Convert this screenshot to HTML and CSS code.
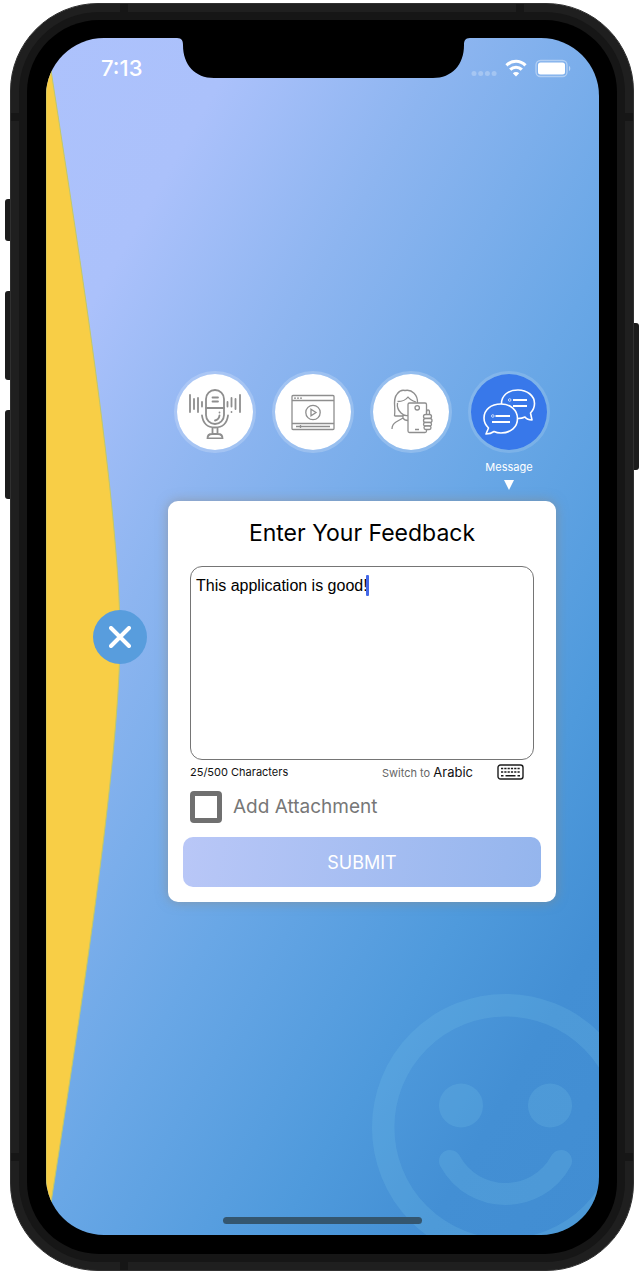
FILE: index.html
```html
<!DOCTYPE html>
<html lang="en">
<head>
<meta charset="utf-8">
<meta name="viewport" content="width=device-width, initial-scale=1">
<title>Feedback</title>
<link rel="stylesheet" href="styles.css">
</head>
<body>
<div class="phone">
  <span class="key key-mute"></span>
  <span class="key key-up"></span>
  <span class="key key-down"></span>
  <span class="key key-power"></span>
  <span class="band band-top band-start"></span>
  <span class="band band-top band-end"></span>
  <span class="band band-left band-high"></span>
  <span class="band band-right band-high"></span>
  <span class="band band-left band-low"></span>
  <span class="band band-right band-low"></span>
  <span class="band band-bottom band-start"></span>
  <div class="bezel">
    <div class="glass">
      <div class="screen">
        <svg class="curve" viewBox="0 0 74 1197" preserveAspectRatio="none" aria-hidden="true">
          <path d="M0 0C31 200 74 470 74 598C74 727 31 997 0 1197Z" fill="#f8ce46" stroke="#c0c86c" stroke-width="1"/>
        </svg>
        <svg class="smiley" viewBox="0 0 227 241" aria-hidden="true">
          <circle cx="133.500" cy="133.500" r="122.300" fill="none" stroke="currentColor" stroke-width="22.400"/>
          <circle cx="89" cy="111.500" r="22" fill="currentColor"/>
          <circle cx="178" cy="111.500" r="22" fill="currentColor"/>
          <path d="M78 167C102 211 165 211 189 167" fill="none" stroke="currentColor" stroke-width="22" stroke-linecap="round"/>
        </svg>
        <svg class="notch" viewBox="0 0 293 40" aria-hidden="true">
          <path d="M0 0C5 0 6 3 6 7C6 27 18 40 37 40H256C275 40 287 27 287 7C287 3 288 0 293 0Z"/>
        </svg>

        <header class="status">
          <time class="clock">7:13</time>
          <div class="signals">
            <svg class="dots" width="26" height="20" viewBox="0 0 26 20" fill="#fff" fill-opacity=".25"><circle cx="3" cy="15.500" r="2.500"/><circle cx="9.700" cy="15.500" r="2.500"/><circle cx="16.400" cy="15.500" r="2.500"/><circle cx="23.100" cy="15.500" r="2.500"/></svg>
            <svg width="22" height="20" viewBox="0 0 22 20" fill="none" stroke="#fff" stroke-width="3.200"><path d="M1.500 7.300C7 1.900 15 1.900 20.500 7.300"/><path d="M5.200 11.700C8.500 8.400 13.500 8.400 16.800 11.700"/><path d="M11 18.500L7.800 15.200C9.500 13.600 12.500 13.600 14.200 15.200Z" fill="#fff" stroke="none"/></svg>
            <svg width="36" height="20" viewBox="0 0 36 20"><rect x="1" y="2.500" width="31" height="16" rx="4.500" fill="none" stroke="#fff" stroke-opacity=".4" stroke-width="1.300"/><rect x="3" y="4.500" width="27" height="12" rx="2.500" fill="#fff"/><path d="M34 8C35.700 8.500 35.700 12.500 34 13Z" fill="#fff" fill-opacity=".5"/></svg>
          </div>
        </header>

        <main class="stage">
          <button class="close" type="button" aria-label="Close">
            <svg width="22" height="22" viewBox="0 0 22 22" fill="none" stroke="#fff" stroke-width="4" stroke-linecap="round"><path d="M2 2L20 20M20 2L2 20"/></svg>
          </button>
          <div class="panel">
            <nav class="modes" aria-label="Feedback type">
              <div class="mode">
                <button class="disc" type="button" aria-label="Audio">
                  <svg width="54" height="54" viewBox="0 0 54 54" fill="none" stroke="#8e8e8e" stroke-width="1.800" stroke-linecap="round"><rect x="18" y="5" width="18" height="34" rx="9"/><path d="M18 23H36M24.500 12.500H30M24.500 16.500H30M14 30.500C15 38.500 20 42.500 27 42.500S39 38.500 40 30.500M24.500 43V49M29.500 43V49M19.500 53.500C19.500 50 22 49 24 49H30C32 49 34.500 50 34.500 53.500ZM2 10V27M6 14V24M10 13V27M14 17V21.500M39.500 17V21.500M43.500 13V21.500M47.500 14V24M52 10V27M43.500 27V27.100M31.500 27.500V27.600M31.500 30.500C31 33.500 29.500 35 27 35.500"/></svg>
                </button>
              </div>
              <div class="mode">
                <button class="disc" type="button" aria-label="Video">
                  <svg width="54" height="54" viewBox="0 0 54 54" fill="none" stroke="#8e8e8e" stroke-width="1.300"><rect x="6" y="10.500" width="42" height="34" rx="1"/><path d="M6 15.500H48M6 38.500H48M10 41.500H44M14.500 40V43"/><path d="M8 13.200H16" stroke-dasharray="2 1"/><circle cx="27" cy="27.500" r="7.200"/><path d="M25 24.300L30 27.500L25 30.700Z"/></svg>
                </button>
              </div>
              <div class="mode">
                <button class="disc" type="button" aria-label="Photo">
                  <svg width="54" height="54" viewBox="0 0 54 54" fill="none" stroke="#8e8e8e" stroke-width="1.300" stroke-linejoin="round"><path d="M10.500 31C12 23 8 14 13.500 8.500C16 5 19 5 21 5.500C28 4 34 10 33.500 18M10.500 31H19.500M13.500 18C13 21 14 25 17 28C18.500 29.500 21 31 24 30.500M13.500 16.500C18 16.500 22 15 24 12C26 15 29 16 32 17M19 29V33L12 37C9 39 8 41 8 44M19 33C20 35 22 35.500 24 35.500"/><rect x="24" y="18" width="18.500" height="29.500" rx="1.500" fill="#fff"/><circle cx="33.200" cy="22.800" r="2.200"/><path d="M31 44.500H35M42.500 27.500C42.500 24 45.500 24 45.500 27.500V30.500"/><rect x="39.500" y="29.500" width="8" height="4" rx="2" fill="#fff"/><rect x="39.500" y="33.500" width="8.500" height="4" rx="2" fill="#fff"/><rect x="39.500" y="37.500" width="8" height="3.500" rx="1.700" fill="#fff"/><rect x="40" y="41" width="7" height="3.500" rx="1.700" fill="#fff"/></svg>
                </button>
              </div>
              <div class="mode">
                <button class="disc disc-active" type="button" aria-labelledby="mode-message">
                  <svg width="54" height="54" viewBox="0 0 54 54" fill="#3878ea" stroke="#fff" stroke-width="1.600" stroke-linejoin="round"><path d="M36 5C26 5 19.500 10.500 19.500 18.500C19.500 27.500 26 33.500 36 33.500C39 33.500 41 33 43 32C44.500 34 47 35 50 35L48.500 28C51 25.500 52.500 22.500 52.500 18.500C52.500 10.500 45 5 36 5Z"/><path d="M31 15H45M31 21H45" stroke-width="1.900"/><circle cx="27.700" cy="15" r="1.300" stroke-width=".7"/><path d="M19 19C9 19 2 24.500 2 33C2 37.500 4 40.500 6.500 43L4 49C7.500 49 10 48 12 46.500C14 47.500 16.500 48 19 48C29 48 35.500 42 35.500 33.500C35.500 25 28.500 19 19 19Z"/><path d="M13.500 31H28M10 37H28" stroke-width="1.900"/><circle cx="10.800" cy="31" r="1.300" stroke-width=".7"/></svg>
                </button>
                <span class="mode-name" id="mode-message">Message</span>
                <svg class="arrow" width="10" height="10" viewBox="0 0 10 10" fill="#fff"><path d="M0 0H10L5 10Z"/></svg>
              </div>
            </nav>

            <form class="card">
              <h1 class="title"><label for="feedback">Enter Your Feedback</label></h1>
              <div class="field">
                <textarea class="message" id="feedback" spellcheck="false">This application is good!</textarea>
                <span class="caret"></span>
              </div>
              <div class="meta">
                <span class="count">25/500 Characters</span>
                <span class="switch">Switch to <button class="lang" type="button">Arabic</button></span>
                <button class="keyboard" type="button" aria-label="Keyboard">
                  <svg width="27" height="16" viewBox="0 0 27 16" fill="none" stroke="#1c1c1c" stroke-width="1.400"><rect x="1" y="1" width="25" height="14" rx="2.500"/><path d="M4 4.500H23M4 8H23" stroke-dasharray="2.200 1.100"/><path d="M4 11.800H6.500M8.500 11.800H18.500M20.500 11.800H23"/></svg>
                </button>
              </div>
              <label class="attach"><input class="tick" type="checkbox">Add Attachment</label>
              <button class="submit" type="submit">SUBMIT</button>
            </form>
          </div>
        </main>

        <footer class="home"><span class="home-bar"></span></footer>
      </div>
    </div>
  </div>
</div>
</body>
</html>
```
FILE: styles.css
```css
* {
  box-sizing: border-box;
}

body {
  margin: 0;
  padding: 3px 10px;
  min-height: 100vh;
  display: flex;
  background: #fff;
  font-family: Inter, Roboto, sans-serif;
  color: #111;
}

button {
  padding: 0;
  border: 0;
  background: none;
  font: inherit;
  color: inherit;
  cursor: pointer;
}

svg {
  display: block;
}

/* Device shell */
.phone {
  position: relative;
  flex: 1;
  display: flex;
  padding: 8px;
  border: 1px solid #303030;
  border-radius: 88px;
  background: #1f1f1f;
}

.bezel {
  flex: 1;
  display: flex;
  padding: 8px;
  border-radius: 80px;
  background: #161616;
}

.glass {
  flex: 1;
  display: flex;
  padding: 18px 18px 19px 19px;
  border-radius: 72px;
  background: #000;
}

.key {
  position: absolute;
  width: 5px;
  background: #1c1c1c;
}

.key-mute,
.key-up,
.key-down {
  left: -6px;
  border-radius: 3px 0 0 3px;
}

.key-mute {
  top: 195px;
  height: 42px;
}

.key-up {
  top: 287px;
  height: 89px;
}

.key-down {
  top: 406px;
  height: 89px;
}

.key-power {
  right: -6px;
  top: 319px;
  height: 147px;
  border-radius: 0 3px 3px 0;
}

.band {
  position: absolute;
  width: 8px;
  height: 8px;
  background: #161616;
}

.band-top { top: 0; }
.band-bottom { bottom: 0; }
.band-left { left: 0; }
.band-right { right: 0; }
.band-start { left: 109px; }
.band-end { right: 109px; }
.band-high { top: 109px; }
.band-low { bottom: 109px; }

/* Screen */
.screen {
  position: relative;
  flex: 1;
  display: grid;
  grid-template-rows: 60px 1fr 60px;
  overflow: hidden;
  border-radius: 58px;
  background: linear-gradient(120deg, #adc2fc 0%, #abc1fb 16%, #8db5f0 33%, #69a7e6 55%, #4f9adc 74%, #438fd4 86%, #418dd2 100%);
}

.curve {
  position: absolute;
  left: 0;
  top: 0;
  width: 74px;
  height: 100%;
}

.smiley {
  position: absolute;
  right: 0;
  bottom: 0;
  width: 227px;
  height: 241px;
  color: rgba(120, 195, 230, 0.22);
}

.notch {
  position: absolute;
  left: 50%;
  top: 0;
  width: 293px;
  height: 40px;
  margin-left: -146px;
}

.status {
  position: relative;
  display: flex;
  justify-content: space-between;
  align-items: center;
  padding: 0 28px 0 55px;
  color: #fff;
}

.clock {
  font-size: 22px;
  line-height: 24px;
  font-weight: 500;
}

.signals {
  display: flex;
  gap: 8px;
}

.stage {
  position: relative;
  display: flex;
  align-items: center;
  gap: 21px;
  padding: 0 43px 0 47px;
}

.close {
  flex: none;
  display: grid;
  place-items: center;
  width: 54px;
  height: 54px;
  border-radius: 50%;
  background: #589ddd;
}

.panel {
  flex: 1;
  min-width: 0;
}

.modes {
  display: flex;
  justify-content: space-between;
  align-items: flex-start;
  padding: 0 6px;
  height: 130px;
}

.mode {
  display: flex;
  flex-direction: column;
  align-items: center;
}

.disc {
  display: grid;
  place-items: center;
  width: 82px;
  height: 82px;
  border: 3px solid rgba(255, 255, 255, 0.2);
  border-radius: 50%;
  background: #fff;
  background-clip: padding-box;
}

.disc-active {
  border-color: rgba(255, 255, 255, 0.14);
  background-color: #3878ea;
}

.mode-name {
  margin-top: 6px;
  font-size: 11px;
  line-height: 16px;
  color: #fff;
}

.arrow {
  margin-top: 5px;
}

/* Feedback card */
.card {
  padding: 16px 15px 15px;
  border-radius: 10px;
  background: #fff;
  box-shadow: 0 0 12px rgba(140, 135, 125, 0.6);
}

.title {
  margin: 0 0 17px;
  font-size: 23px;
  line-height: 32px;
  font-weight: 400;
  text-align: center;
  color: #000;
}

.field {
  position: relative;
  margin: 0 7px;
}

.message {
  display: block;
  width: 100%;
  height: 194px;
  padding: 9px 5px;
  border: 1px solid #757575;
  border-radius: 12px;
  outline: 0;
  resize: none;
  background: #fff;
  font: 16px/20px "Liberation Sans", Arial, sans-serif;
  color: #000;
}

.caret {
  position: absolute;
  left: 176px;
  top: 9px;
  width: 3px;
  height: 21px;
  border-radius: 1px;
  background: #4368e8;
}

.meta {
  display: flex;
  align-items: center;
  height: 24px;
  margin: 0 17px 7px 7px;
  font-size: 11px;
}

.count {
  flex: 1;
}

.switch {
  color: #666;
}

.lang {
  font-size: 13px;
  color: #111;
}

.keyboard {
  margin-left: 24px;
}

.attach {
  display: flex;
  align-items: center;
  gap: 11px;
  margin: 0 7px 14px;
  font-size: 19px;
  line-height: 32px;
  color: #777;
}

.tick {
  appearance: none;
  width: 32px;
  height: 32px;
  margin: 0;
  border: 5px solid #707070;
  border-radius: 4px;
  background: #fff;
}

.tick:checked {
  background: #707070;
}

.submit {
  display: block;
  width: 100%;
  height: 50px;
  border-radius: 10px;
  background: linear-gradient(100deg, #b9c7f7, #94b5ed);
  font-size: 18px;
  color: #fff;
}

.home {
  position: relative;
  display: flex;
  justify-content: center;
  align-items: flex-end;
  padding-bottom: 11px;
}

.home-bar {
  width: 36%;
  height: 7px;
  border-radius: 4px;
  background: #34566f;
}
```
